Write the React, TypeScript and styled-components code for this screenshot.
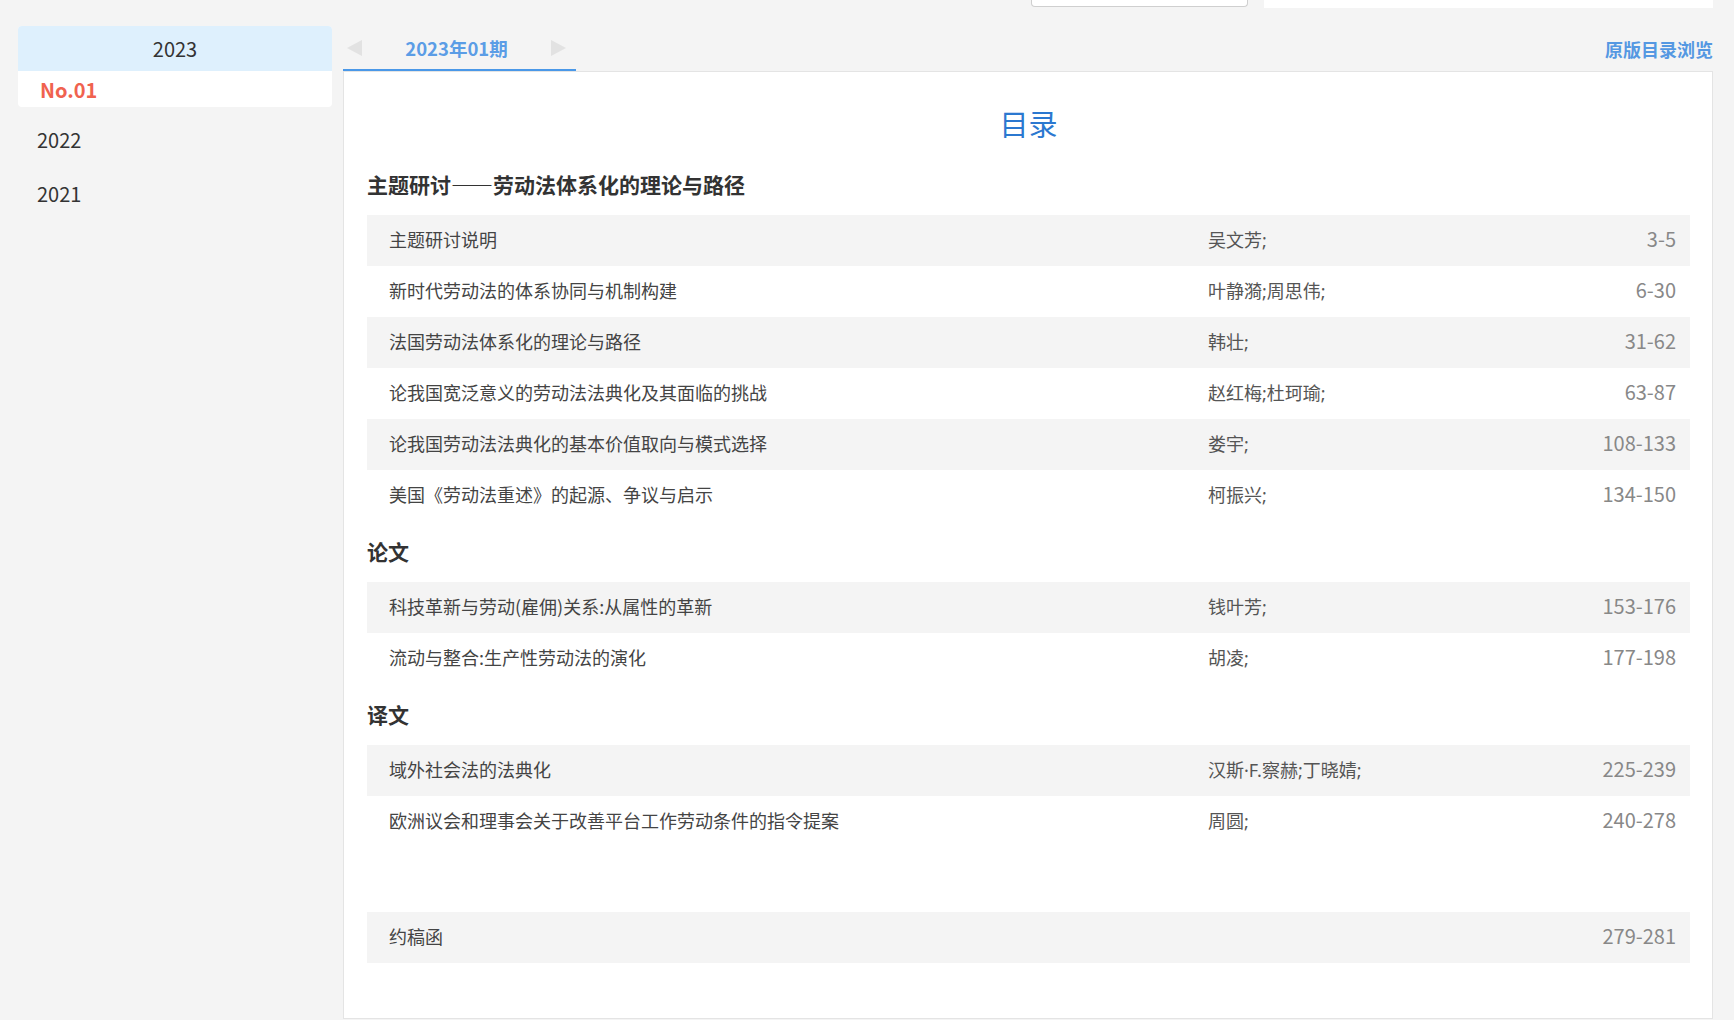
import React from "react"
import styled, { createGlobalStyle } from "styled-components"

const GlobalStyle = createGlobalStyle`
  html, body {
    margin: 0;
    padding: 0;
    background: #f4f4f4;
    font-family: "Noto Sans CJK SC", "Noto Sans", sans-serif;
    color: #333;
  }
`

type Article = { title: string; authors?: string; pages: string }
type Section = { name: string; articles: Article[] }

const sections: Section[] = [
  {
    name: "主题研讨——劳动法体系化的理论与路径",
    articles: [
      { title: "主题研讨说明", authors: "吴文芳;", pages: "3-5" },
      { title: "新时代劳动法的体系协同与机制构建", authors: "叶静漪;周思伟;", pages: "6-30" },
      { title: "法国劳动法体系化的理论与路径", authors: "韩壮;", pages: "31-62" },
      { title: "论我国宽泛意义的劳动法法典化及其面临的挑战", authors: "赵红梅;杜珂瑜;", pages: "63-87" },
      { title: "论我国劳动法法典化的基本价值取向与模式选择", authors: "娄宇;", pages: "108-133" },
      { title: "美国《劳动法重述》的起源、争议与启示", authors: "柯振兴;", pages: "134-150" }
    ]
  },
  {
    name: "论文",
    articles: [
      { title: "科技革新与劳动(雇佣)关系:从属性的革新", authors: "钱叶芳;", pages: "153-176" },
      { title: "流动与整合:生产性劳动法的演化", authors: "胡凌;", pages: "177-198" }
    ]
  },
  {
    name: "译文",
    articles: [
      { title: "域外社会法的法典化", authors: "汉斯·F.察赫;丁晓婧;", pages: "225-239" },
      { title: "欧洲议会和理事会关于改善平台工作劳动条件的指令提案", authors: "周圆;", pages: "240-278" }
    ]
  },
  {
    name: "",
    articles: [{ title: "约稿函", pages: "279-281" }]
  }
]

const TopStrip = styled.div`
  display: flex;
  justify-content: flex-end;
  gap: 16px;
  padding-right: 21px;
  height: 8px;
`

const SearchStub = styled.div`
  width: 215px;
  height: 6px;
  background: #fff;
  border: 1px solid #cfcfcf;
  border-top: none;
  border-radius: 0 0 4px 4px;
`

const BarStub = styled.div`
  width: 449px;
  height: 8px;
  background: #fff;
`

const Layout = styled.div`
  display: flex;
  gap: 11px;
  padding: 18px 21px 0 18px;
  align-items: flex-start;
`

const Sidebar = styled.aside`
  width: 314px;
  flex-shrink: 0;
`

const YearBlock = styled.div`
  background: #fff;
  border-radius: 4px;
  overflow: hidden;
  margin-bottom: 5px;
`

const YearHead = styled.div`
  height: 45px;
  background: #def0fd;
  display: flex;
  align-items: center;
  justify-content: center;
  font-size: 20px;
  color: #333;
`

const Issue = styled.div`
  height: 36px;
  display: flex;
  align-items: center;
  padding-left: 22px;
  font-size: 20px;
  font-weight: bold;
  color: #f0624f;
`

const YearItem = styled.div`
  height: 54px;
  display: flex;
  align-items: center;
  padding-left: 19px;
  font-size: 20px;
  color: #333;
`

const Main = styled.main`
  flex: 1;
  min-width: 0;
`

const TabBar = styled.div`
  height: 45px;
  display: flex;
  align-items: stretch;
  justify-content: space-between;
`

const Tab = styled.div`
  width: 233px;
  box-sizing: border-box;
  border-bottom: 2px solid #4a98e8;
  display: flex;
  align-items: center;
  justify-content: space-between;
  padding: 0 10px 0 4px;
  font-size: 18.5px;
  font-weight: bold;
  color: #5b9de6;
`

const Arrow = styled.span<{ $dir: "left" | "right" }>`
  width: 0;
  height: 0;
  border-top: 8px solid transparent;
  border-bottom: 8px solid transparent;
  ${(p) =>
    p.$dir === "left"
      ? `border-right: 15px solid #e2e2e2;`
      : `border-left: 15px solid #e2e2e2;`}
`

const BrowseLink = styled.a`
  align-self: center;
  padding-top: 1px;
  font-size: 18px;
  font-weight: bold;
  color: #5598e2;
  text-decoration: none;
`

const Panel = styled.div`
  background: #fff;
  border: 1px solid #e4e4e4;
  padding: 0 22px 55px 23px;
`

const Title = styled.h1`
  margin: 0 0 11px;
  padding-top: 31px;
  text-align: center;
  font-size: 29px;
  line-height: 40px;
  font-weight: normal;
  color: #2b78d0;
`

const SectionHead = styled.h2`
  margin: 0;
  height: 61px;
  box-sizing: border-box;
  padding-top: 16px;
  font-size: 21px;
  line-height: 28px;
  font-weight: bold;
  color: #333;
  font-feature-settings: "fwid";
  &:empty {
    height: 65px;
  }
`

const Row = styled.div`
  height: 51px;
  box-sizing: border-box;
  display: grid;
  grid-template-columns: 819px 1fr auto;
  align-items: center;
  padding: 0 14px 4px 22px;
  font-size: 18px;
  &:nth-child(odd) {
    background: #f4f4f4;
  }
`

const ArticleTitle = styled.span`
  color: #444;
`

const Authors = styled.span`
  color: #555;
  font-family: "Noto Sans", "Noto Sans CJK SC", sans-serif;
`

const Pages = styled.span`
  color: #888;
  text-align: right;
  font-size: 20px;
`

const ToC = () => (
  <Panel>
    <Title children="目录" />
    {sections.map((section, i) => (
      <div key={i}>
        <SectionHead children={section.name || null} />
        <div>
          {section.articles.map((a) => (
            <Row key={a.title}>
              <ArticleTitle children={a.title} />
              <Authors children={a.authors ?? ""} />
              <Pages children={a.pages} />
            </Row>
          ))}
        </div>
      </div>
    ))}
  </Panel>
)

const App = () => (
  <>
    <GlobalStyle />
    <TopStrip>
      <SearchStub />
      <BarStub />
    </TopStrip>
    <Layout>
      <Sidebar>
        <YearBlock>
          <YearHead children="2023" />
          <Issue children="No.01" />
        </YearBlock>
        <YearItem children="2022" />
        <YearItem children="2021" />
      </Sidebar>
      <Main>
        <TabBar>
          <Tab>
            <Arrow $dir="left" />
            <span>2023年01期</span>
            <Arrow $dir="right" />
          </Tab>
          <BrowseLink href="#" children="原版目录浏览" />
        </TabBar>
        <ToC />
      </Main>
    </Layout>
  </>
)

export default App
